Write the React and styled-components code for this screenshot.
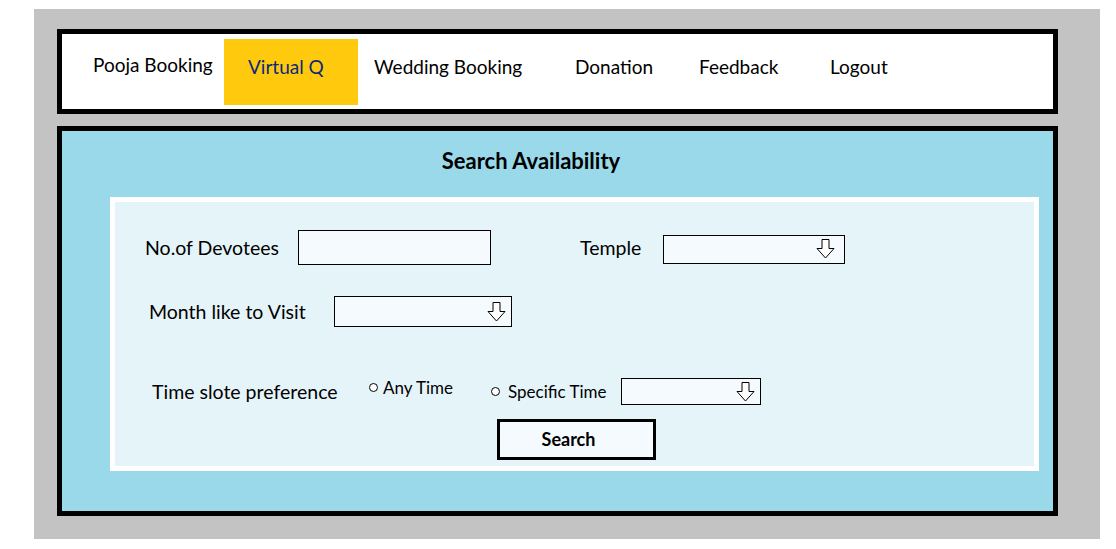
import React from 'react';
import styled, { createGlobalStyle } from 'styled-components';

const Global = createGlobalStyle`
    body {
        margin: 0;
        background: #ffffff;
        font-family: Lato, 'Open Sans', sans-serif;
        color: #000;
    }
`;

const Frame = styled.div`
    box-sizing: border-box;
    width: 1066px;
    height: 530px;
    margin: 9px 0 0 34px;
    padding: 20px 42px 0 23px;
    background: #c3c3c3;
`;

const Nav = styled.nav`
    box-sizing: border-box;
    display: flex;
    align-items: center;
    height: 85px;
    padding-left: 31px;
    border: 5px solid #000;
    background: #fff;
`;

const NavItem = styled.div`
    box-sizing: border-box;
    display: flex;
    align-items: center;
    width: ${p => p.$w}px;
    height: 66px;
    padding-left: ${p => p.$pad || 0}px;
    padding-bottom: ${p => p.$raise || 10}px;
    font-size: 19px;
    background: ${p => (p.$active ? '#ffc90e' : 'transparent')};
    color: ${p => (p.$active ? '#0b2a7a' : '#000')};
    white-space: nowrap;
`;

const Main = styled.section`
    box-sizing: border-box;
    height: 390px;
    margin-top: 12px;
    padding: 17px 14px 0 48px;
    border: 5px solid #000;
    background: #99d9ea;
`;

const Title = styled.h2`
    margin: 0 0 23px;
    padding-right: 87px;
    text-align: center;
    font-size: 22px;
    font-weight: 700;
    line-height: 26px;
`;

const Panel = styled.div`
    box-sizing: border-box;
    height: 274px;
    padding-top: 28px;
    border: 5px solid #fff;
    background: #e5f4f9;
`;

const Row = styled.div`
    display: flex;
    align-items: center;
    height: ${p => p.$h}px;
    margin-top: ${p => p.$top || 0}px;
    padding-left: ${p => p.$left}px;
`;

const Label = styled.label`
    flex: none;
    width: ${p => p.$w}px;
    margin-left: ${p => p.$gap || 0}px;
    font-size: 19.5px;
    white-space: nowrap;
`;

const Field = styled.div`
    box-sizing: border-box;
    position: relative;
    flex: none;
    width: ${p => p.$w}px;
    height: ${p => p.$h}px;
    margin-top: ${p => p.$dy || 0}px;
    border: 1px solid #000;
    background: #f5fafe;
`;

const Arrow = styled.svg`
    position: absolute;
    right: ${p => p.$right || 9}px;
    top: 50%;
    transform: translateY(-50%);
`;

const Radio = styled.span`
    box-sizing: border-box;
    flex: none;
    width: 9px;
    height: 9px;
    margin-right: ${p => p.$gap || 5}px;
    border: 1px solid #000;
    border-radius: 50%;
    background: #fff;
`;

const RadioGroup = styled.div`
    display: flex;
    align-items: center;
    width: ${p => p.$w}px;
    margin-top: ${p => p.$dy || 0}px;
    font-size: 17px;
    white-space: nowrap;
`;

const ButtonRow = styled.div`
    display: flex;
    padding-left: 382px;
    margin-top: 14px;
`;

const SearchBtn = styled.button`
    width: 159px;
    height: 41px;
    padding: 0 16px 2px 0;
    border: 3px solid #000;
    background: #f5fafe;
    font-family: Lato, sans-serif;
    font-size: 18px;
    font-weight: 700;
    color: #000;
`;

const DownArrow = ({ right }) => (
    <Arrow $right={right} width="19" height="20" viewBox="0 0 19 20">
        <path d="M6 0.5 H13 V9.5 H18 L9.5 19 L1 9.5 H6 Z" fill="#fff" stroke="#000" strokeWidth="1" />
    </Arrow>
);

const App = () => {
    return (
        <>
            <Global />
            <Frame>
                <Nav>
                    <NavItem $w={131} $raise={14}>Pooja Booking</NavItem>
                    <NavItem $w={134} $pad={24} $active>Virtual Q</NavItem>
                    <NavItem $w={217} $pad={16}>Wedding Booking</NavItem>
                    <NavItem $w={124}>Donation</NavItem>
                    <NavItem $w={131}>Feedback</NavItem>
                    <NavItem $w={100}>Logout</NavItem>
                </Nav>
                <Main>
                    <Title>Search Availability</Title>
                    <Panel>
                        <Row $h={35} $left={30}>
                            <Label $w={153}>No.of Devotees</Label>
                            <Field $w={193} $h={35} />
                            <Label $w={83} $gap={89}>Temple</Label>
                            <Field $w={182} $h={29} $dy={3}>
                                <DownArrow right={9} />
                            </Field>
                        </Row>
                        <Row $h={31} $top={31} $left={34}>
                            <Label $w={185}>Month like to Visit</Label>
                            <Field $w={178} $h={31}>
                                <DownArrow right={5} />
                            </Field>
                        </Row>
                        <Row $h={27} $top={51} $left={37}>
                            <Label $w={217}>Time slote preference</Label>
                            <RadioGroup $w={122} $dy={-8}>
                                <Radio />Any Time
                            </RadioGroup>
                            <RadioGroup $w={130}>
                                <Radio $gap={8} />Specific Time
                            </RadioGroup>
                            <Field $w={140} $h={27}>
                                <DownArrow right={5} />
                            </Field>
                        </Row>
                        <ButtonRow>
                            <SearchBtn>Search</SearchBtn>
                        </ButtonRow>
                    </Panel>
                </Main>
            </Frame>
        </>
    );
};

export default App;
